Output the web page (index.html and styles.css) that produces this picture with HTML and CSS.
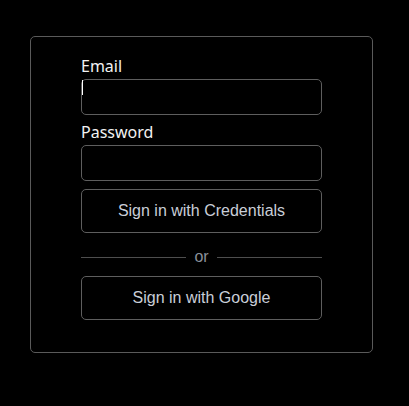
FILE: index.html
```html
<!DOCTYPE html>
<html lang="en">
<head>
<meta charset="utf-8">
<title>Sign in</title>
<link rel="stylesheet" href="styles.css">
</head>
<body>
<main class="page">
  <form class="card" onsubmit="return false">
    <label class="label" for="email">Email</label>
    <div class="field-wrap">
      <input class="field" id="email" type="email">
      <span class="caret"></span>
    </div>
    <label class="label label-pw" for="password">Password</label>
    <div class="field-wrap">
      <input class="field" id="password" type="password">
    </div>
    <button class="btn btn-creds" type="submit">Sign in with Credentials</button>
    <div class="divider"><span class="line"></span><span class="or">or</span><span class="line"></span></div>
    <button class="btn" type="button">Sign in with Google</button>
  </form>
</main>
</body>
</html>
```
FILE: styles.css
```css
html, body {
  margin: 0;
  padding: 0;
  background: #000;
}
.page {
  padding: 36px 0 0 30px;
}
.card {
  box-sizing: border-box;
  width: 343px;
  height: 317px;
  border: 1px solid #5a5a5a;
  border-radius: 5px;
  padding: 20px 50px 0 50px;
  display: flex;
  flex-direction: column;
}
.label {
  font-family: "Noto Sans", "Open Sans", sans-serif;
  font-size: 16px;
  line-height: 19px;
  color: #f2f2f2;
  margin-bottom: 3px;
}
.label-pw {
  margin-top: 8px;
}
.field-wrap {
  position: relative;
}
.field {
  box-sizing: border-box;
  display: block;
  width: 100%;
  height: 36px;
  margin: 0;
  padding: 0;
  background: #000;
  border: 1px solid #5e5e5e;
  border-radius: 5px;
  outline: none;
  color: #fff;
}
.caret {
  position: absolute;
  left: 1px;
  top: 1px;
  width: 1px;
  height: 15px;
  background: #fff;
}
.btn {
  box-sizing: border-box;
  height: 44px;
  width: 100%;
  margin: 0;
  padding: 0;
  background: #000;
  border: 1px solid #5e5e5e;
  border-radius: 5px;
  font-family: "Liberation Sans", Arial, sans-serif;
  font-size: 16px;
  color: #c9ced8;
  cursor: pointer;
}
.btn-creds {
  margin-top: 8px;
}
.divider {
  display: flex;
  align-items: center;
  height: 20px;
  margin: 14px 0 9px;
}
.line {
  flex: 1;
  height: 1px;
  background: #4e4e4e;
}
.or {
  font-family: "Liberation Sans", Arial, sans-serif;
  font-size: 16px;
  line-height: 20px;
  color: #8b909a;
  margin: 0 8px;
}
```
